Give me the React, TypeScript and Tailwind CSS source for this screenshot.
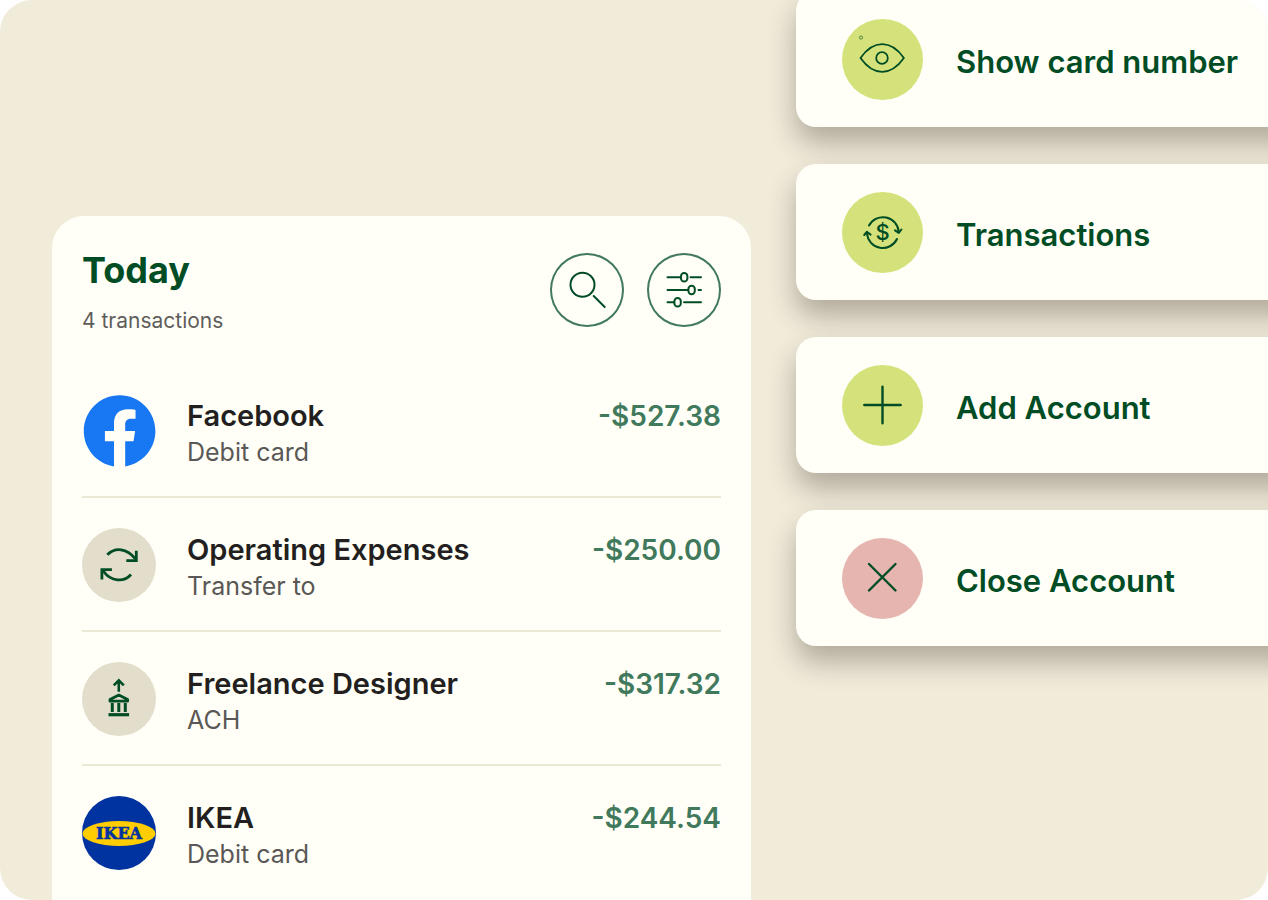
import React from 'react';

interface Transaction {
  name: string;
  detail: string;
  amount: string;
  icon: React.ReactNode;
}

interface Action {
  label: string;
  circle: string;
  icon: React.ReactNode;
}

const SearchIcon = () => (
  <svg viewBox="0 0 74 74" className="w-full h-full" fill="none" stroke="currentColor" strokeWidth="2" strokeLinecap="round">
    <circle cx="32.5" cy="31.7" r="12" />
    <path d="M43.7 43l11 11" />
  </svg>
);

const FilterIcon = () => (
  <svg viewBox="0 0 74 74" className="w-full h-full" fill="none" stroke="currentColor" strokeWidth="2" strokeLinecap="round">
    <path d="M20.5 24.3h12.8M43.5 24.3H54M20.5 37h20.2M51.5 37H54M20.5 49.3h6.3M37 49.3h17" />
    <rect x="34" y="20" width="6.4" height="8.6" rx="3.2" />
    <rect x="41.4" y="32.7" width="6.4" height="8.6" rx="3.2" />
    <rect x="27.4" y="45" width="6.4" height="8.6" rx="3.2" />
  </svg>
);

const FacebookLogo = () => (
  <svg viewBox="-0.6 -0.33 24.8 24.8" className="w-full h-full">
    <path
      fill="#1877f2"
      d="M24 12.073c0-6.627-5.373-12-12-12s-12 5.373-12 12c0 5.99 4.388 10.954 10.125 11.854v-8.385H7.078v-3.47h3.047V9.43c0-3.007 1.792-4.669 4.533-4.669 1.312 0 2.686.235 2.686.235v2.953H15.83c-1.491 0-1.956.925-1.956 1.874v2.25h3.328l-.532 3.47h-2.796v8.385C19.612 23.027 24 18.062 24 12.073z"
    />
  </svg>
);

const TransferIcon = () => (
  <svg viewBox="0 0 74 74" className="w-full h-full" fill="none" stroke="#004d25" strokeWidth="2.8">
    <circle cx="37" cy="37" r="37" fill="#e3decb" stroke="none" />
    <path d="M25.3 26.8C33 19 45 20 53.5 31" />
    <path d="M54.3 22.8v9.8h-10" />
    <path d="M49 46.5C42 54.5 29 54 21.3 43" />
    <path d="M19.9 51.5v-9.8h10" />
  </svg>
);

const BankIcon = () => (
  <svg viewBox="0 0 74 74" className="w-full h-full" fill="none" stroke="#004d25" strokeWidth="2.8">
    <circle cx="37" cy="37" r="37" fill="#e3decb" stroke="none" />
    <path d="M36.8 29.8V19M31.8 23.4l5-5 5 5" strokeWidth="2.6" />
    <path d="M28 39.2v-1.6l8.8-4.5 8.8 4.5v1.6z" strokeWidth="2.8" strokeLinejoin="round" />
    <path d="M30.3 41v9M36.8 41v9M43.3 41v9" strokeWidth="3" />
    <path d="M26.5 52.7h20.6" strokeWidth="3.2" />
  </svg>
);

const IkeaLogo = () => (
  <svg viewBox="0 0 74 74" className="w-full h-full">
    <circle cx="37" cy="37" r="37" fill="#0033a0" />
    <ellipse cx="37" cy="37.5" rx="36.5" ry="12.5" fill="#ffcd00" />
    <text
      x="37"
      y="43.2"
      textAnchor="middle"
      fontFamily="DejaVu Serif, serif"
      fontWeight="700"
      fontSize="16"
      fill="#0033a0"
      stroke="#0033a0"
      strokeWidth="0.6"
    >
      IKEA
    </text>
  </svg>
);

const EyeIcon = () => (
  <svg viewBox="0 0 81 81" className="w-full h-full" fill="none" stroke="currentColor" strokeWidth="1.8">
    <path d="M18.5 39C25 29.8 32 25.2 40.2 25.2S55.4 29.8 61.9 39C55.4 48.2 48.4 52.8 40.2 52.8S25 48.2 18.5 39z" strokeLinejoin="round" />
    <circle cx="40" cy="39" r="5.8" />
    <circle cx="19" cy="18.5" r="1.6" strokeWidth="1" opacity="0.6" />
  </svg>
);

const DollarCycleIcon = () => (
  <svg viewBox="0 0 81 81" className="w-full h-full" fill="none" stroke="currentColor" strokeWidth="2" strokeLinecap="round" strokeLinejoin="round">
    <path d="M27 33.5A15.8 15.8 0 0 1 56.7 40" />
    <path d="M53 38.3l3.8 2.6 2.6-3.4" />
    <path d="M55 47A15.8 15.8 0 0 1 25 41.5" />
    <path d="M22.2 43l2.6-3.2 3.8 2.8" />
    <text
      x="40.6"
      y="48.2"
      textAnchor="middle"
      fontFamily="Inter, sans-serif"
      fontWeight="500"
      fontSize="22"
      fill="currentColor"
      stroke="none"
    >
      $
    </text>
  </svg>
);

const PlusIcon = () => (
  <svg viewBox="0 0 81 81" className="w-full h-full" stroke="currentColor" strokeWidth="2.4" strokeLinecap="round">
    <path d="M22.3 40h36.4M40.5 21.8v36.4" />
  </svg>
);

const CloseIcon = () => (
  <svg viewBox="0 0 81 81" className="w-full h-full" stroke="currentColor" strokeWidth="2.4" strokeLinecap="round">
    <path d="M27 26l26.5 26.5M53.5 26L27 52.5" />
  </svg>
);

const transactions: Transaction[] = [
  { name: 'Facebook', detail: 'Debit card', amount: '-$527.38', icon: <FacebookLogo /> },
  { name: 'Operating Expenses', detail: 'Transfer to', amount: '-$250.00', icon: <TransferIcon /> },
  { name: 'Freelance Designer', detail: 'ACH', amount: '-$317.32', icon: <BankIcon /> },
  { name: 'IKEA', detail: 'Debit card', amount: '-$244.54', icon: <IkeaLogo /> },
];

const actions: Action[] = [
  { label: 'Show card number', circle: 'bg-[#d5e27b]', icon: <EyeIcon /> },
  { label: 'Transactions', circle: 'bg-[#d5e27b]', icon: <DollarCycleIcon /> },
  { label: 'Add Account', circle: 'bg-[#d5e27b]', icon: <PlusIcon /> },
  { label: 'Close Account', circle: 'bg-[#e6b5b0]', icon: <CloseIcon /> },
];

export default function App() {
  return (
    <div className="min-h-screen bg-white flex">
      <main className="flex-1 grid grid-cols-[699fr_472fr] gap-[45px] pl-[52px] bg-[#f1ebda] rounded-[32px] overflow-hidden font-['Inter',sans-serif]">
        <section className="mt-[216px] px-[30px] pt-[37px] bg-[#fffff7] rounded-t-[32px]">
          <header className="flex justify-between items-start pb-[25px]">
            <div>
              <h1 className="text-4xl leading-[34px] font-bold text-[#004d25]">Today</h1>
              <p className="mt-4 text-[21px] leading-9 text-[#5f5d5b]">4 transactions</p>
            </div>
            <div className="flex gap-[23px] text-[#004d25]">
              <button aria-label="Search" className="w-[74px] h-[74px] rounded-full ring-2 ring-inset ring-[#41795c]">
                <SearchIcon />
              </button>
              <button aria-label="Filter" className="w-[74px] h-[74px] rounded-full ring-2 ring-inset ring-[#41795c]">
                <FilterIcon />
              </button>
            </div>
          </header>

          <ul>
            {transactions.map((item) => (
              <li
                key={item.name}
                className="flex items-start pt-[30px] pb-[26px] border-b-2 border-[#ebe8d6] last:border-b-0"
              >
                <div className="w-[74px] h-[74px] shrink-0">{item.icon}</div>
                <div className="flex-1 flex justify-between pt-1 pl-[31px]">
                  <div>
                    <h2 className="text-[29px] leading-9 font-semibold text-[#231f20]">{item.name}</h2>
                    <p className="text-[25px] leading-9 text-[#5a5856]">{item.detail}</p>
                  </div>
                  <span className="text-[28px] leading-9 font-semibold text-[#41795c]">{item.amount}</span>
                </div>
              </li>
            ))}
          </ul>
        </section>

        {/* runs past the right edge so the cards look cut off */}
        <nav className="-mt-[9px] -mr-12 flex flex-col gap-[37px]">
          {actions.map((action) => (
            <button
              key={action.label}
              className="flex items-center gap-[33px] h-[136px] pl-[46px] bg-[#fffff7] rounded-l-[20px] text-[#004d25] shadow-[0_16px_28px_rgba(50,40,30,0.33)]"
            >
              <span className={`w-[81px] h-[81px] shrink-0 rounded-full ${action.circle}`}>{action.icon}</span>
              <span className="pt-1.5 text-[31px] font-semibold whitespace-nowrap">{action.label}</span>
            </button>
          ))}
        </nav>
      </main>
    </div>
  );
}
